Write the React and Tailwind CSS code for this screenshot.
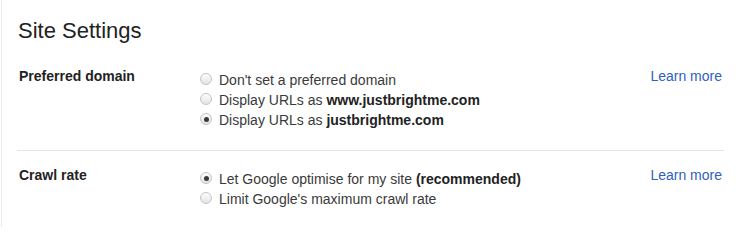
import React from "react";

const Radio = ({ checked }) => (
  <span className="relative mt-[2px] flex h-[12px] w-[12px] shrink-0 items-center justify-center rounded-full border border-[#c4c4c4] bg-gradient-to-b from-[#fdfdfd] to-[#e4e4e4]">
    {checked && <span className="h-[5px] w-[5px] rounded-full bg-[#3a3a3a]"></span>}
  </span>
);

const Option = ({ checked, children }) => (
  <div className="flex h-[20px] items-start gap-[7px]">
    <Radio checked={checked} />
    <span className="leading-[20px] -mt-[1px]">{children}</span>
  </div>
);

const Section = ({ label, children }) => (
  <div className="flex items-start pr-[32px]">
    <div className="w-[181px] shrink-0 font-bold leading-[20px] text-[#222]">{label}</div>
    <div className="mt-[5px] flex-1 text-[#3a3a3a]">{children}</div>
    <a href="#" className="leading-[20px] text-[#2f5fbf]">
      Learn more
    </a>
  </div>
);

const App = () => {
  return (
    <div className="h-[227px] w-[754px] overflow-hidden bg-white font-['Liberation_Sans',Arial,sans-serif] text-[14px]">
      <div className="ml-px h-full border-l border-[#ececec] pl-[17px] pt-[18px]">
        <h1 className="-ml-px text-[22px] leading-[25px] text-[#222]">Site Settings</h1>

        {/* Preferred domain */}
        <div className="mt-[23px]">
          <Section label="Preferred domain">
            <Option>Don't set a preferred domain</Option>
            <Option>
              Display URLs as <b className="text-[#222]">www.justbrightme.com</b>
            </Option>
            <Option checked>
              Display URLs as <b className="text-[#222]">justbrightme.com</b>
            </Option>
          </Section>
        </div>

        <div className="-ml-[2px] mr-[30px] mt-[19px] border-t border-[#e5e5e5]"></div>

        {/* Crawl rate */}
        <div className="mt-[14px]">
          <Section label="Crawl rate">
            <Option checked>
              Let Google optimise for my site <b className="text-[#222]">(recommended)</b>
            </Option>
            <Option>Limit Google's maximum crawl rate</Option>
          </Section>
        </div>
      </div>
    </div>
  );
};

export default App;
